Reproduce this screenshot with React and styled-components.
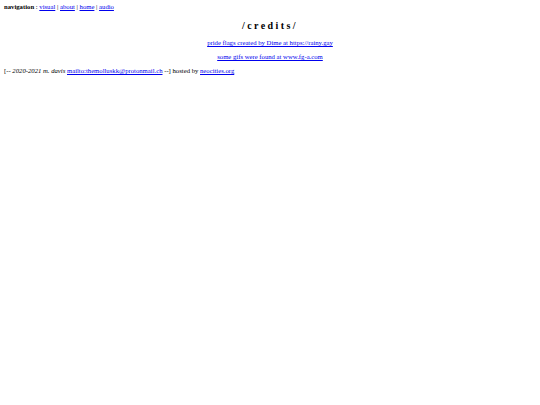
import React from "react";
import styled, { createGlobalStyle } from "styled-components";

const Global = createGlobalStyle`
  html, body { margin: 0; padding: 0; background: #fff; }
  body { font-family: "Liberation Serif", "Times New Roman", serif; font-size: 6.7px; color: #000; }
  a { color: #0000ee; }
`;

const Page = styled.div`
  padding: 3px 4px;
`;

const Nav = styled.div`
  line-height: 8px;
  & b { font-weight: bold; }
`;

const Title = styled.h1`
  margin: 9px 0 0;
  text-align: center;
  font-size: 10px;
  font-weight: bold;
  letter-spacing: 2.4px;
  line-height: 12px;
`;

const Line = styled.p`
  margin: ${(p) => p.$top}px 0 0;
  text-align: center;
  line-height: 8px;
`;

const Footer = styled.div`
  margin-top: 6px;
  line-height: 8px;
`;

export default function App() {
  return (
    <>
      <Global />
      <Page>
        <Nav>
          <b>navigation</b> : <a href="#">visual</a> | <a href="#">about</a> | <a href="#">home</a> | <a href="#">audio</a>
        </Nav>
        <Title>/credits/</Title>
        <Line $top={7}><a href="#">pride flags created by Dime at https://rainy.gay</a></Line>
        <Line $top={6}><a href="#">some gifs were found at www.fg-a.com</a></Line>
        <Footer>
          [-- <i>2020-2021 m. davis</i> <a href="#">mailto:themolluskk@protonmail.ch</a> --] hosted by <a href="#">neocities.org</a>
        </Footer>
      </Page>
    </>
  );
}
